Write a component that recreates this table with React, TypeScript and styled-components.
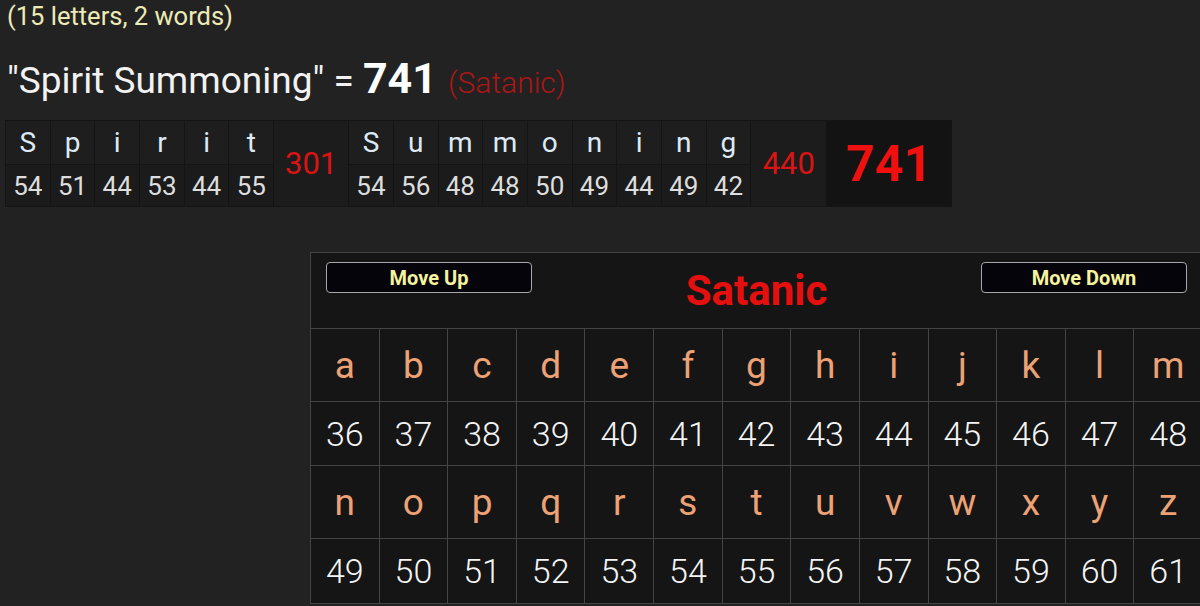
import React from "react";
import styled, { createGlobalStyle } from "styled-components";

const GlobalStyle = createGlobalStyle`
  html, body {
    margin: 0;
    padding: 0;
    background: #222222;
    overflow: hidden;
    font-family: Roboto, "Noto Sans", "Liberation Sans", sans-serif;
  }
`;

const Page = styled.div`
  display: flex;
  flex-direction: column;
  align-items: flex-start;
  padding-left: 5px;
`;

const Count = styled.div`
  margin-top: 1px;
  padding-left: 2px;
  font-size: 25.5px;
  line-height: 30px;
  color: #eeeab6;
`;

const Phrase = styled.div`
  margin-top: 26px;
  padding-left: 2px;
  font-size: 37px;
  line-height: 42px;
  color: #f2f2f2;
  display: flex;
  align-items: baseline;
  white-space: pre;
`;

const PhraseTotal = styled.span`
  font-weight: 700;
  font-size: 43px;
  color: #ffffff;
  margin-right: 11px;
`;

const PhraseCipher = styled.span`
  font-weight: 300;
  font-size: 30px;
  color: #ad1616;
`;

const Breakdown = styled.div`
  margin-top: 16px;
  display: flex;
  gap: 1px;
  padding: 1px;
  background: #141414;
`;

const LetterCol = styled.div`
  width: 43.7px;
  display: flex;
  flex-direction: column;
  gap: 1px;
`;

const LetterCell = styled.div`
  height: 43px;
  background: #1e1e1e;
  color: #dde9f4;
  font-size: 28px;
  display: flex;
  align-items: center;
  justify-content: center;
`;

const ValueCell = styled.div`
  height: 41px;
  background: #1b1b1b;
  color: #dddddd;
  font-size: 26px;
  display: flex;
  align-items: center;
  justify-content: center;
`;

const WordTotal = styled.div<{ $w: number }>`
  width: ${(p) => p.$w}px;
  background: #1c1c1c;
  color: #d91414;
  font-size: 31px;
  display: flex;
  align-items: center;
  justify-content: center;
`;

const GrandTotal = styled.div`
  width: 124px;
  background: #131313;
  color: #f01010;
  font-size: 50px;
  font-weight: 700;
  display: flex;
  align-items: center;
  justify-content: center;
`;

const Panel = styled.div`
  margin-top: 45px;
  margin-left: 305px;
  width: 891px;
  flex-shrink: 0;
  border-top: 1px solid #444444;
  border-left: 1px solid #444444;
  background: #151515;
`;

const PanelHeader = styled.div`
  height: 75px;
  box-sizing: border-box;
  padding: 9px 15px 0 15px;
  display: flex;
  justify-content: space-between;
  align-items: flex-start;
`;

const MoveButton = styled.button`
  width: 206px;
  height: 31px;
  box-sizing: border-box;
  background: #04040a;
  border: 1.5px solid #a8a8a8;
  border-radius: 4px;
  color: #f6f39e;
  font-family: Roboto, "Noto Sans", sans-serif;
  font-weight: 700;
  font-size: 20px;
  line-height: 26px;
  padding: 0;
  cursor: pointer;
`;

const CipherTitle = styled.div`
  flex: 1;
  align-self: center;
  margin-top: -8px;
  text-align: center;
  color: #e41010;
  font-weight: 700;
  font-size: 42px;
  line-height: 48px;
`;

const ChartGrid = styled.div`
  display: grid;
  grid-template-columns: repeat(13, 1fr);
  grid-template-rows: 72px 63px 72px 64px;
  gap: 1px;
  padding: 1px 0 1px 0;
  background: #444444;
`;

const ChartLetter = styled.div`
  background: #151515;
  color: #eda275;
  font-size: 37px;
  display: flex;
  align-items: center;
  justify-content: center;
`;

const ChartValue = styled.div`
  background: #151515;
  color: #f4f4f4;
  font-size: 34px;
  font-weight: 300;
  display: flex;
  align-items: center;
  justify-content: center;
`;

const words: { letters: [string, number][]; total: number; w: number }[] = [
  {
    letters: [
      ["S", 54],
      ["p", 51],
      ["i", 44],
      ["r", 53],
      ["i", 44],
      ["t", 55],
    ],
    total: 301,
    w: 74,
  },
  {
    letters: [
      ["S", 54],
      ["u", 56],
      ["m", 48],
      ["m", 48],
      ["o", 50],
      ["n", 49],
      ["i", 44],
      ["n", 49],
      ["g", 42],
    ],
    total: 440,
    w: 75,
  },
];

const alphabet = "abcdefghijklmnopqrstuvwxyz".split("");

export default function App() {
  const rows = [alphabet.slice(0, 13), alphabet.slice(13)];
  return (
    <>
      <GlobalStyle />
      <Page>
        <Count>(15 letters, 2 words)</Count>
        <Phrase>
          {'"Spirit Summoning" = '}
          <PhraseTotal>741</PhraseTotal>
          <PhraseCipher>(Satanic)</PhraseCipher>
        </Phrase>
        <Breakdown>
          {words.map((word, wi) => (
            <React.Fragment key={wi}>
              {word.letters.map(([ch, v], i) => (
                <LetterCol key={i}>
                  <LetterCell>{ch}</LetterCell>
                  <ValueCell>{v}</ValueCell>
                </LetterCol>
              ))}
              <WordTotal $w={word.w}>{word.total}</WordTotal>
            </React.Fragment>
          ))}
          <GrandTotal>741</GrandTotal>
        </Breakdown>
        <Panel>
          <PanelHeader>
            <MoveButton>Move Up</MoveButton>
            <CipherTitle>Satanic</CipherTitle>
            <MoveButton>Move Down</MoveButton>
          </PanelHeader>
          <ChartGrid>
            {rows.map((row, ri) => (
              <React.Fragment key={ri}>
                {row.map((ch) => (
                  <ChartLetter key={ch}>{ch}</ChartLetter>
                ))}
                {row.map((ch) => (
                  <ChartValue key={ch + "v"}>
                    {ch.charCodeAt(0) - 96 + 35}
                  </ChartValue>
                ))}
              </React.Fragment>
            ))}
          </ChartGrid>
        </Panel>
      </Page>
    </>
  );
}
